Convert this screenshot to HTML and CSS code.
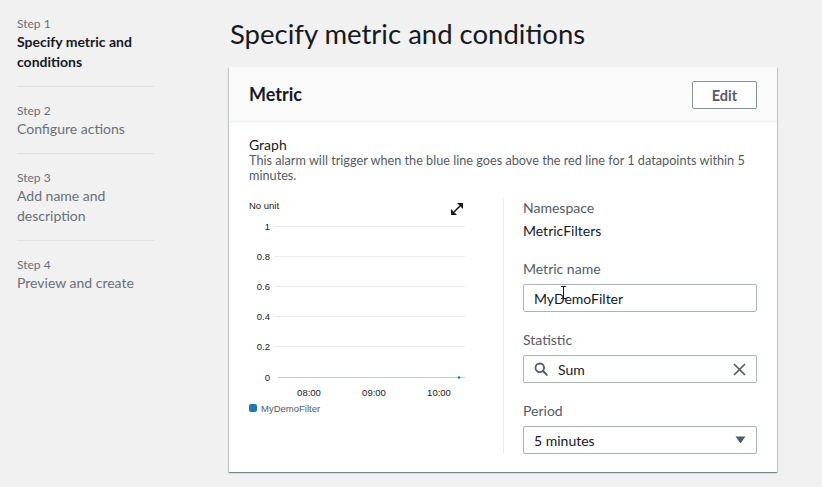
FILE: index.html
```html
<!DOCTYPE html>
<html lang="en">
<head>
<meta charset="utf-8">
<title>Specify metric and conditions</title>
<link rel="stylesheet" href="styles.css">
</head>
<body>
<div class="page">
  <nav class="steps">
    <div class="step current">
      <div class="step-num">Step 1</div>
      <div class="step-title">Specify metric and conditions</div>
    </div>
    <div class="step">
      <div class="step-num">Step 2</div>
      <div class="step-title">Configure actions</div>
    </div>
    <div class="step">
      <div class="step-num">Step 3</div>
      <div class="step-title">Add name and description</div>
    </div>
    <div class="step last">
      <div class="step-num">Step 4</div>
      <div class="step-title">Preview and create</div>
    </div>
  </nav>
  <main class="main">
    <h1 class="page-title">Specify metric and conditions</h1>
    <section class="card">
      <header class="card-header">
        <h2 class="card-title">Metric</h2>
        <button class="btn">Edit</button>
      </header>
      <div class="card-body">
        <div class="graph-title">Graph</div>
        <p class="graph-desc">This alarm will trigger when the blue line goes above the red line for 1 datapoints within 5 minutes.</p>
        <div class="columns">
          <div class="chart-col">
            <svg class="chart" width="254" height="226" viewBox="0 0 254 226">
              <text class="axis-title" x="0" y="11">No unit</text>
              <g class="expand" stroke="#16191f" stroke-width="1.6" fill="#16191f">
                <line x1="205" y1="14" x2="211" y2="8"/>
                <path d="M208 5 L214 5 L214 11 Z" stroke="none"/>
                <path d="M202 11 L202 17 L208 17 Z" stroke="none"/>
              </g>
              <g class="grid" stroke="#e9ebed" stroke-width="1">
                <line x1="25" y1="28.5" x2="216" y2="28.5"/>
                <line x1="25" y1="58.5" x2="216" y2="58.5"/>
                <line x1="25" y1="88.5" x2="216" y2="88.5"/>
                <line x1="25" y1="118.5" x2="216" y2="118.5"/>
                <line x1="25" y1="148.5" x2="216" y2="148.5"/>
              </g>
              <line x1="29" y1="179.5" x2="216" y2="179.5" stroke="#c6cdd0" stroke-width="1"/>
              <g class="ylabels">
                <text x="21" y="32">1</text>
                <text x="21" y="62">0.8</text>
                <text x="21" y="92">0.6</text>
                <text x="21" y="122">0.4</text>
                <text x="21" y="152">0.2</text>
                <text x="21" y="183">0</text>
              </g>
              <g class="xlabels">
                <text x="60" y="197.5">08:00</text>
                <text x="125" y="197.5">09:00</text>
                <text x="190" y="197.5">10:00</text>
              </g>
              <circle cx="210" cy="179.5" r="1.3" fill="#1f77b4"/>
              <rect x="0" y="206" width="8" height="8" rx="2" fill="#1f77b4"/>
              <text class="legend" x="12" y="213.5">MyDemoFilter</text>
            </svg>
          </div>
          <div class="form-col">
            <div class="field">
              <div class="label">Namespace</div>
              <div class="value">MetricFilters</div>
            </div>
            <div class="field">
              <div class="label">Metric name</div>
              <div class="input has-cursor">MyDemoFilter
                <svg class="ibeam" width="7" height="13" viewBox="0 0 7 13"><path d="M1 0.5 L6 0.5 M3.5 0.5 L3.5 12.5 M1 12.5 L6 12.5" stroke="#16191f" stroke-width="1" fill="none"/></svg>
              </div>
            </div>
            <div class="field">
              <div class="label">Statistic</div>
              <div class="input search">
                <svg class="icon" width="14" height="14" viewBox="0 0 14 14"><circle cx="5.8" cy="5.8" r="4.3" fill="none" stroke="#545b64" stroke-width="1.8"/><line x1="9" y1="9" x2="12.8" y2="12.8" stroke="#545b64" stroke-width="1.9" stroke-linecap="round"/></svg>
                <span class="grow">Sum</span>
                <svg class="icon" width="13" height="13" viewBox="0 0 13 13"><path d="M1 1 L12 12 M12 1 L1 12" stroke="#545b64" stroke-width="1.7" fill="none"/></svg>
              </div>
            </div>
            <div class="field">
              <div class="label">Period</div>
              <div class="input select">
                <span class="grow">5 minutes</span>
                <svg class="icon" width="11" height="8" viewBox="0 0 11 8"><path d="M0.5 0.5 L10.5 0.5 L5.5 7.5 Z" fill="#545b64"/></svg>
              </div>
            </div>
          </div>
        </div>
      </div>
    </section>
  </main>
</div>
</body>
</html>
```

FILE: styles.css
```css
html, body {
  margin: 0;
  padding: 0;
}
body {
  background: #f1f1f1;
  font-family: "Lato", "Open Sans", sans-serif;
  color: #16191f;
  width: 822px;
  height: 487px;
  overflow: hidden;
}
.page {
  display: grid;
  grid-template-columns: 229px 548px;
}
.steps {
  padding: 16px 0 0 17px;
}
.step {
  width: 137px;
  padding: 16px 0 14px;
  border-bottom: 1px solid #dfe2e2;
}
.step.current {
  padding-top: 0;
}
.step.last {
  border-bottom: none;
}
.step-num {
  font-size: 12px;
  line-height: 16px;
  color: #687078;
}
.step-title {
  font-size: 14px;
  line-height: 20px;
  color: #687078;
}
.current .step-title {
  color: #16191f;
  font-weight: 700;
}
.main {
  padding-top: 17px;
}
.page-title {
  margin: 0 0 17px 1px;
  font-size: 27.5px;
  line-height: 33px;
  font-weight: 400;
  color: #16191f;
}
.card {
  background: #fff;
  box-shadow: 0 1px 1px 0 rgba(0, 28, 36, 0.3), 1px 1px 1px 0 rgba(0, 28, 36, 0.15), -1px 1px 1px 0 rgba(0, 28, 36, 0.15);
}
.card-header {
  height: 55px;
  box-sizing: border-box;
  padding: 0 20px;
  display: flex;
  align-items: center;
  justify-content: space-between;
  background: #fafafa;
  border-bottom: 1px solid #eaeded;
}
.card-title {
  margin: 0;
  font-size: 18px;
  font-weight: 700;
  color: #16191f;
}
.btn {
  width: 65px;
  height: 28px;
  margin-top: 2px;
  border: 1px solid #879596;
  border-radius: 2px;
  background: #fff;
  font-family: inherit;
  font-size: 14.5px;
  font-weight: 700;
  color: #545b64;
  padding: 0;
}
.card-body {
  padding: 14px 20px 18px;
}
.graph-title {
  font-size: 14px;
  line-height: 17px;
}
.graph-desc {
  margin: 0;
  font-size: 12.7px;
  line-height: 15px;
  color: #545b64;
}
.columns {
  display: flex;
  margin-top: 14px;
}
.chart-col {
  width: 254px;
  flex: none;
  border-right: 1px solid #eaeded;
  margin-top: 1px;
}
.chart {
  display: block;
  font-family: "Liberation Sans", Arial, sans-serif;
}
.axis-title, .legend {
  font-size: 9.5px;
  fill: #16191f;
}
.legend {
  fill: #545b64;
}
.ylabels text {
  font-size: 9.5px;
  fill: #16191f;
  text-anchor: end;
}
.xlabels text {
  font-size: 9.5px;
  fill: #16191f;
  text-anchor: middle;
}
.form-col {
  flex: 1;
  padding-left: 19px;
  padding-top: 1px;
  display: flex;
  flex-direction: column;
  gap: 18px;
}
.label {
  font-size: 14px;
  line-height: 20px;
  color: #545b64;
}
.value {
  margin-top: 3px;
  font-size: 14px;
  line-height: 20px;
  color: #16191f;
}
.input {
  margin-top: 5px;
  height: 28px;
  box-sizing: border-box;
  border: 1px solid #aab7b8;
  border-radius: 2px;
  padding: 0 10px;
  display: flex;
  align-items: center;
  gap: 10px;
  font-size: 14px;
  color: #16191f;
}
.has-cursor {
  position: relative;
}
.ibeam {
  position: absolute;
  left: 36px;
  top: 1px;
}
.grow {
  flex: 1;
}
.icon {
  flex: none;
  display: block;
}
```
